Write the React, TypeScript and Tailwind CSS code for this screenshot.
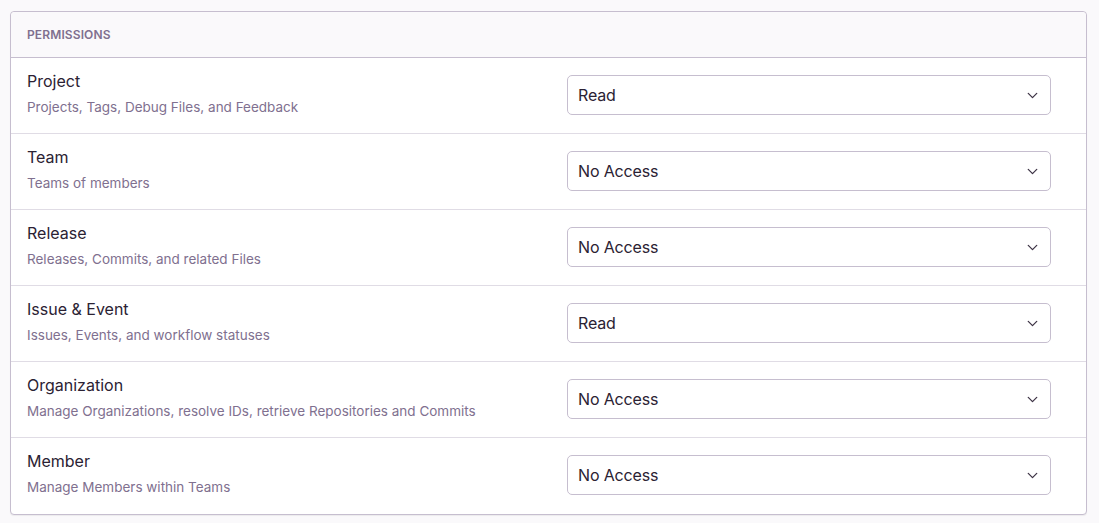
import { ChevronDown } from 'lucide-react';

const PERMS = [
  { name: 'Project', desc: 'Projects, Tags, Debug Files, and Feedback', value: 'Read' },
  { name: 'Team', desc: 'Teams of members', value: 'No Access' },
  { name: 'Release', desc: 'Releases, Commits, and related Files', value: 'No Access' },
  { name: 'Issue & Event', desc: 'Issues, Events, and workflow statuses', value: 'Read' },
  { name: 'Organization', desc: 'Manage Organizations, resolve IDs, retrieve Repositories and Commits', value: 'No Access' },
  { name: 'Member', desc: 'Manage Members within Teams', value: 'No Access' },
];

export default function App() {
  return (
    <div className="min-h-[523px] bg-[#faf9fb] pt-[11px] pl-[10px] pr-[12px] font-['Inter',sans-serif] text-[#2b2233]">
      <div className="rounded border border-[#c6becf] bg-white shadow-[0_1px_1px_rgba(0,0,0,0.06)]">
        {/* header */}
        <div className="flex h-[46px] items-center rounded-t border-b border-[#c6becf] bg-[#faf9fb] px-4">
          <span className="text-[12px] font-semibold uppercase tracking-[0.01em] text-[#80708f]">Permissions</span>
        </div>

        {PERMS.map((p, i) => (
          <div
            key={p.name}
            className={`flex h-[76px] items-start pl-4 pr-[35px] ${i < PERMS.length - 1 ? 'border-b border-[#e0dce5]' : ''}`}
          >
            <div className="flex-1 pt-[13px]">
              <div className="text-[16px] leading-[20px]">{p.name}</div>
              <div className="mt-[7px] text-[13.5px] leading-[18px] text-[#80708f]">{p.desc}</div>
            </div>
            <div className="mt-[17px] flex h-[40px] w-[484px] items-center justify-between rounded-[5px] border border-[#c6becf] bg-white pl-[10px] pr-[9px]">
              <span className="text-[16px] tracking-[-0.01em]">{p.value}</span>
              <ChevronDown size={17} strokeWidth={1.8} className="text-[#3e3446]" />
            </div>
          </div>
        ))}
      </div>
    </div>
  );
}
